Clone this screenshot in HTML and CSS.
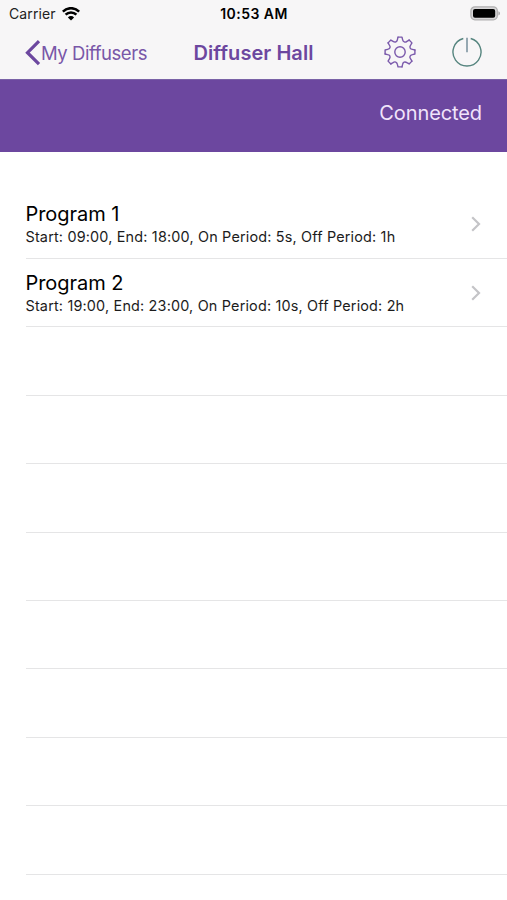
FILE: index.html
```html
<!DOCTYPE html>
<html lang="en">
<head>
    <meta charset="UTF-8">
    <meta name="viewport" content="width=device-width, initial-scale=1.0">
    <title>Diffuser Hall</title>
    <link rel="stylesheet" href="styles.css">
</head>
<body>
    <header class="header">
        <div class="status">
            <div class="status-left">
                <span class="carrier">Carrier</span>
                <svg width="18" height="14" viewBox="0 0 18 14">
                    <path d="M.8 4.6a11.5 11.5 0 0 1 16.4 0M3.6 7.7a7.6 7.6 0 0 1 10.8 0" fill="none" stroke="#000" stroke-width="2.5"/>
                    <path d="M9 13.6L5.9 10.4a4.4 4.4 0 0 1 6.2 0z"/>
                </svg>
            </div>
            <span class="time">10:53 AM</span>
            <svg class="battery" width="30" height="15" viewBox="0 0 30 15">
                <rect x=".9" y=".8" width="26.4" height="13" rx="4" fill="#d8d7d8" stroke="#b1b0b1" stroke-width="1.3"/>
                <rect x="3" y="3" width="22.2" height="8.8" rx="2"/>
                <path d="M28.4 5.2q1.6.6 1.6 2.2t-1.6 2.2z" fill="#a9a8a9"/>
            </svg>
        </div>
        <nav class="nav">
            <a class="back">
                <svg width="16" height="26" viewBox="0 0 16 26">
                    <path d="M14 1.2L2.5 12.7 14 24.2" fill="none" stroke="currentColor" stroke-width="3.2"/>
                </svg>
                <span class="back-text">My Diffusers</span>
            </a>
            <h1 class="title">Diffuser Hall</h1>
            <div class="actions">
                <svg width="32" height="32" viewBox="-16 -16 32 32" fill="none" stroke="#7a59ab" stroke-width="1.4" stroke-linejoin="round" stroke-linecap="round">
                    <defs>
                        <path id="tooth" d="M-2-14.9H2L2.6-12.4C3.1-9.9 5.1-9.2 6.93-10.6L9.12-11.95"/>
                    </defs>
                    <use href="#tooth"/>
                    <use href="#tooth" transform="rotate(45)"/>
                    <use href="#tooth" transform="rotate(90)"/>
                    <use href="#tooth" transform="rotate(135)"/>
                    <use href="#tooth" transform="rotate(180)"/>
                    <use href="#tooth" transform="rotate(225)"/>
                    <use href="#tooth" transform="rotate(270)"/>
                    <use href="#tooth" transform="rotate(315)"/>
                    <circle r="5.2"/>
                </svg>
                <svg width="30" height="30" viewBox="0 0 30 30" fill="none" stroke="#56857f" stroke-width="1.4">
                    <path d="M11.3 1.5a14 14 0 1 0 7.4 0"/>
                    <path d="M15 .8V15.2" stroke="#7d95a0" stroke-width="1.6"/>
                </svg>
            </div>
        </nav>
    </header>

    <div class="banner">Connected</div>

    <ul class="list">
        <li class="row">
            <div>
                <div class="row-title">Program 1</div>
                <div class="row-detail">Start: 09:00, End: 18:00, On Period: 5s, Off Period: 1h</div>
            </div>
            <svg width="10" height="16" viewBox="0 0 10 16">
                <path d="M1.2 1.3L8 8l-6.8 6.7" fill="none" stroke="#c4c4c7" stroke-width="2.2"/>
            </svg>
        </li>
        <li class="row">
            <div>
                <div class="row-title">Program 2</div>
                <div class="row-detail">Start: 19:00, End: 23:00, On Period: 10s, Off Period: 2h</div>
            </div>
            <svg width="10" height="16" viewBox="0 0 10 16">
                <path d="M1.2 1.3L8 8l-6.8 6.7" fill="none" stroke="#c4c4c7" stroke-width="2.2"/>
            </svg>
        </li>
        <li class="row"></li>
        <li class="row"></li>
        <li class="row"></li>
        <li class="row"></li>
        <li class="row"></li>
        <li class="row"></li>
        <li class="row"></li>
        <li class="row"></li>
    </ul>
</body>
</html>
```
FILE: styles.css
```css
* {
    box-sizing: border-box;
}

body {
    margin: 0;
    height: 900px;
    overflow: hidden;
    background-color: #fff;
    color: #000;
    font-family: Inter, "Liberation Sans", sans-serif;
}

.header {
    height: 79px;
    background-color: #f7f6f7;
}

.status {
    display: grid;
    grid-template-columns: 1fr auto 1fr;
    align-items: center;
    height: 27px;
    padding: 0 7px 0 9px;
    font-size: 14px;
}

.status-left {
    display: flex;
    align-items: center;
    gap: 6px;
}

.carrier {
    color: #222;
    letter-spacing: .1px;
}

.time {
    margin-right: 1px;
    font-weight: 600;
    letter-spacing: .45px;
}

.battery {
    justify-self: end;
}

.nav {
    display: grid;
    grid-template-columns: 1fr auto 1fr;
    align-items: center;
    height: 51px;
    padding: 0 25px;
    color: #6c479f;
}

.back {
    display: flex;
    align-items: center;
    white-space: nowrap;
}

.back-text {
    font-size: 18.5px;
    letter-spacing: -.45px;
    color: #7957a8;
}

.title {
    margin: 0;
    font-size: 20px;
    font-weight: 600;
    letter-spacing: .05px;
}

.actions {
    display: flex;
    align-items: center;
    justify-content: flex-end;
    gap: 36px;
    padding-bottom: 2px;
}

.banner {
    height: 73px;
    padding: 20px 25px 0;
    border-top: 1px solid #7a62a6;
    background-color: #6c479f;
    color: #f1e4fb;
    font-size: 20px;
    letter-spacing: -.1px;
    line-height: 26px;
    text-align: right;
}

.list {
    margin: 38.6px 0 0;
    padding: 0 0 0 25.5px;
    list-style: none;
}

.row {
    display: flex;
    align-items: center;
    justify-content: space-between;
    height: 68.4px;
    padding-right: 26px;
    border-bottom: 1px solid #e5e5e6;
}

.row-title {
    font-size: 20px;
    letter-spacing: -.05px;
    line-height: 26px;
}

.row-detail {
    font-size: 14.4px;
    letter-spacing: .18px;
    line-height: 20px;
    color: #1c1c1c;
}
```
